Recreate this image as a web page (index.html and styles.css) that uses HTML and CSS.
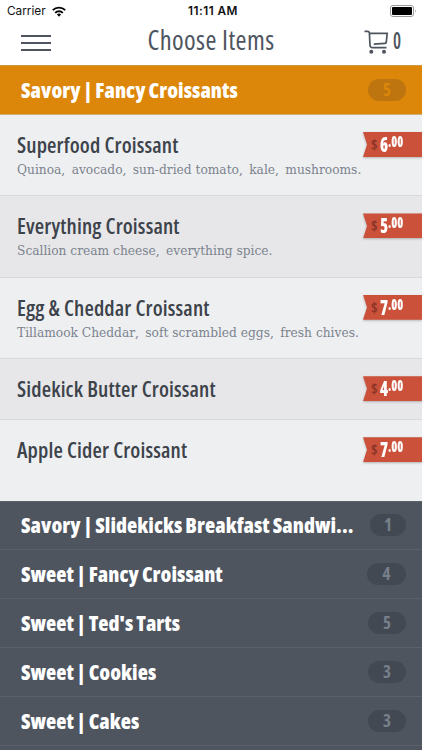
FILE: index.html
```html
<!DOCTYPE html>
<html lang="en">
<head>
    <meta charset="UTF-8">
    <meta name="viewport" content="width=device-width, initial-scale=1.0">
    <title>Choose Items</title>
    <link rel="stylesheet" href="styles.css">
</head>
<body>

    <!-- Status bar -->
    <div class="status-bar">
        <div class="carrier">
            <span>Carrier</span>
            <svg class="wifi" width="14" height="11" viewBox="0 0 14 11">
                <path d="M7 10.7 L4.9 8.5 A3 3 0 0 1 9.1 8.5 Z" fill="#000"/>
                <path d="M3.2 6.8 A5.4 5.4 0 0 1 10.8 6.8 M0.8 4.2 A8.8 8.8 0 0 1 13.2 4.2" fill="none" stroke="#000" stroke-width="1.9"/>
            </svg>
        </div>
        <div class="time">11:11 AM</div>
        <svg class="battery" width="27" height="12" viewBox="0 0 27 12">
            <rect x="0.5" y="0.5" width="23" height="11" rx="2.5" fill="#fff" stroke="#999"/>
            <rect x="2" y="2" width="20" height="8" rx="1" fill="#000"/>
            <path d="M25 4 Q26.5 6 25 8 Z" fill="#999"/>
        </svg>
    </div>

    <!-- Nav bar -->
    <header class="nav">
        <div class="menu-btn"><i></i><i></i><i></i></div>
        <h1>Choose Items</h1>
        <div class="cart">
            <svg width="25" height="24" viewBox="0 0 25 24" fill="none" stroke="#4e555f" stroke-width="1.7">
                <path d="M0.5 1.3 H3.6 Q5.2 1.3 5.4 3 L6 15.3 Q6.2 17.6 8.3 17.6 H22.5"/>
                <path d="M5.4 3.4 H23.2 L22.3 12 Q22.1 13.2 21 13.3 L9.8 14.2"/>
                <circle cx="7.3" cy="21.8" r="2" fill="#4e555f" stroke="none"/>
                <circle cx="20" cy="21.8" r="2" fill="#4e555f" stroke="none"/>
            </svg>
            <span>0</span>
        </div>
    </header>

    <!-- Open category -->
    <div class="category active">
        <h2>Savory | Fancy Croissants</h2>
        <span class="count">5</span>
    </div>

    <ul class="items">
        <li class="item">
            <div class="info">
                <h3>Superfood Croissant</h3>
                <p>Quinoa<span>,</span> avocado<span>,</span> sun-dried tomato<span>,</span> kale<span>,</span> mushrooms.</p>
            </div>
            <div class="price"><div class="flag"><small>$</small><b>6</b><sup>.00</sup></div></div>
        </li>
        <li class="item">
            <div class="info">
                <h3>Everything Croissant</h3>
                <p>Scallion cream cheese<span>,</span> everything spice.</p>
            </div>
            <div class="price"><div class="flag"><small>$</small><b>5</b><sup>.00</sup></div></div>
        </li>
        <li class="item">
            <div class="info">
                <h3>Egg &amp; Cheddar Croissant</h3>
                <p>Tillamook Cheddar<span>,</span> soft scrambled eggs<span>,</span> fresh chives.</p>
            </div>
            <div class="price"><div class="flag"><small>$</small><b>7</b><sup>.00</sup></div></div>
        </li>
        <li class="item short">
            <div class="info">
                <h3>Sidekick Butter Croissant</h3>
            </div>
            <div class="price"><div class="flag"><small>$</small><b>4</b><sup>.00</sup></div></div>
        </li>
        <li class="item">
            <div class="info">
                <h3>Apple Cider Croissant</h3>
            </div>
            <div class="price"><div class="flag"><small>$</small><b>7</b><sup>.00</sup></div></div>
        </li>
    </ul>

    <!-- Closed categories -->
    <div class="category">
        <h2>Savory | Slidekicks Breakfast Sandwi...</h2>
        <span class="count one">1</span>
    </div>
    <div class="category">
        <h2>Sweet | Fancy Croissant</h2>
        <span class="count four">4</span>
    </div>
    <div class="category">
        <h2>Sweet | Ted's Tarts</h2>
        <span class="count">5</span>
    </div>
    <div class="category">
        <h2>Sweet | Cookies</h2>
        <span class="count">3</span>
    </div>
    <div class="category">
        <h2>Sweet | Cakes</h2>
        <span class="count">3</span>
    </div>
    <div class="category end"></div>

</body>
</html>
```
FILE: styles.css
```css
* {
    box-sizing: border-box;
}

body {
    margin: 0;
    height: 750px;
    overflow: hidden;
    background: #4e555f;
    font-family: "Open Sans", "Noto Sans", sans-serif;
    font-stretch: 75%;
}

h1, h2, h3, p, ul {
    margin: 0;
    padding: 0;
    white-space: nowrap;
}

/* Status bar */
.status-bar {
    display: flex;
    justify-content: space-between;
    align-items: center;
    height: 22px;
    padding: 0 5px 0 7px;
    background: #fff;
    font-family: Inter, "Liberation Sans", sans-serif;
    font-size: 11.8px;
    font-stretch: normal;
    color: #111;
}

.carrier,
.battery {
    flex: 0 0 auto;
}

.carrier {
    display: flex;
    align-items: center;
    gap: 6px;
    width: 100px;
}

.time {
    flex: 1;
    padding-right: 71px;
    text-align: center;
    font-weight: 600;
    letter-spacing: 0.45px;
}

/* Nav bar */
.nav {
    display: flex;
    align-items: center;
    height: 43px;
    padding: 0 21px 3px 21px;
    background: #fff;
    color: #4e555f;
}

.menu-btn {
    display: flex;
    flex-direction: column;
    gap: 5.4px;
    width: 80px;
    padding-top: 2px;
}

.menu-btn i {
    width: 30px;
    height: 2px;
    background: #4e555f;
}

.nav h1 {
    flex: 1;
    padding-bottom: 4px;
    text-align: center;
    font-size: 26.5px;
    font-weight: 400;
    letter-spacing: 0.4px;
    line-height: 38px;
}

.cart {
    display: flex;
    align-items: center;
    justify-content: flex-end;
    gap: 4px;
    width: 80px;
    font-size: 24px;
    font-weight: 600;
}

.cart svg {
    flex: none;
}

.cart span {
    width: 8px;
    line-height: 36px;
    padding-bottom: 4px;
    transform: scaleX(0.75);
    transform-origin: left;
}

/* Categories */
.category {
    display: flex;
    align-items: center;
    justify-content: space-between;
    height: 48.9px;
    padding: 0 16px 0 21px;
    border-top: 1px solid #59616b;
    background: #4e555f;
    color: #fff;
}

.category h2 {
    font-size: 21px;
    font-weight: 800;
    line-height: 40px;
    letter-spacing: 0.05px;
    word-spacing: -0.8px;
}

.category.active {
    height: 50px;
    border-top: 1px solid #d09a45;
    border-bottom: 1px solid #cfae7d;
    background: #dd870a;
}

.category.end {
    height: 4px;
}

.count {
    width: 38px;
    height: 22px;
    border-radius: 11px;
    background: #434952;
    color: #77808b;
    font-size: 17px;
    font-weight: 700;
    line-height: 22px;
    text-align: center;
}

.count.one {
    width: 36px;
}

.count.four {
    width: 39px;
}

.active .count {
    background: #be7510;
    color: #dd870a;
}

/* Item list */
.items {
    list-style: none;
    height: 385.5px;
    background: #eeeff1;
}

.item {
    display: flex;
    justify-content: space-between;
    height: 81.4px;
    padding: 16px 0 0 17px;
    border-bottom: 1px solid #d8d9db;
}

.item.short {
    height: 61px;
}

.item:nth-child(even) {
    background: #e7e7e9;
}

.item:last-child {
    height: 80px;
    border-bottom: none;
}

.info {
    width: 345px;
}

.item h3 {
    font-size: 21.5px;
    font-weight: 550;
    letter-spacing: 0.14px;
    line-height: 28px;
    color: #3d434b;
}

.item p {
    font-family: "DejaVu Serif Condensed", "DejaVu Serif", serif;
    font-stretch: condensed;
    font-size: 13.6px;
    line-height: 20px;
    color: #7b838e;
}

/* extra room after each comma */
.item p span {
    letter-spacing: 2.5px;
}

/* Price flag */
.price {
    width: 59px;
    padding-top: 1px;
    filter: drop-shadow(0 1px 1px rgba(0, 0, 0, 0.25));
}

.flag {
    display: flex;
    height: 25px;
    padding-left: 8px;
    background: #cb513a;
    clip-path: polygon(0 0, 100% 0, 100% 100%, 0 100%, 4px 50%);
    color: #fff;
    line-height: 25px;
}

.flag small {
    width: 9px;
    font-size: 14px;
    font-weight: 700;
    color: #8b3528;
}

.flag b {
    width: 8px;
    font-size: 21.5px;
    font-weight: 800;
    line-height: 24px;
    transform: scaleX(0.76);
    transform-origin: left;
}

.flag sup {
    font-size: 15px;
    font-weight: 800;
    line-height: 18px;
    transform: scaleX(0.8);
    transform-origin: left;
}
```
